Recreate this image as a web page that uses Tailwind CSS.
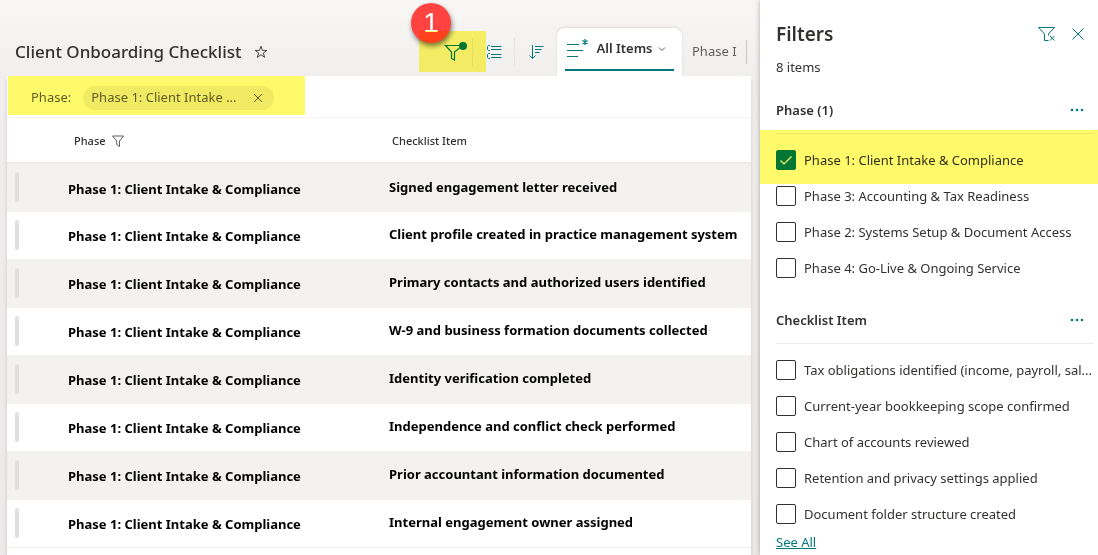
<!DOCTYPE html>
<html lang="en">
<head>
<meta charset="utf-8">
<meta name="viewport" content="width=device-width, initial-scale=1">
<title>Client Onboarding Checklist</title>
<script src="https://cdn.jsdelivr.net/npm/@tailwindcss/browser@4"></script>
</head>
<body class="h-screen overflow-hidden bg-[#edebe9] font-['Noto_Sans','Open_Sans',sans-serif] text-[13px] text-[#323130]">
<div class="flex h-full">

  <main class="flex min-w-0 flex-1 flex-col bg-linear-to-b from-[#f8f7f6] from-0% via-[#f1efee] via-[76px] to-[#eceae9] pr-[9px]">
    <header class="relative flex h-19 shrink-0 items-end pl-[15px]">
      <div class="flex h-12 flex-1 items-center gap-3">
        <h1 class="text-[17px] font-medium whitespace-nowrap">Client Onboarding Checklist</h1>
        <button aria-label="Add to favorites">
          <svg class="size-3.5" viewBox="0 0 14 14" fill="none" stroke="#484644"><path d="M7 1.2 8.4 5.4H12.9L9.3 8 10.7 12.4 7 9.7 3.3 12.4 4.7 8 1.1 5.4H5.6Z"/></svg>
        </button>
      </div>
      <div class="flex h-12 items-center text-[#03787c]">
        <button aria-label="Filter" class="flex h-7 w-[42px] items-center justify-center border-r border-[#e4e2e0] pl-2">
          <svg class="h-5 w-6" viewBox="0 0 24 20" fill="none" stroke="currentColor" stroke-width="1.200"><path d="M15 3.500H1.500L7.500 10V16.500L10.500 18V10L15.500 6"/><circle cx="19" cy="3" r="4" fill="currentColor" stroke="none" transform="translate(0 1)"/></svg>
        </button>
        <button aria-label="Group by" class="flex h-7 w-[42px] items-center justify-center border-r border-[#e4e2e0]">
          <svg class="h-4 w-4" viewBox="0 0 16 16" fill="none" stroke="currentColor"><path d="M5 2.500H15.500M5 5.500H15.500M5 10.500H15.500M5 13.500H15.500"/><path d="M4 1.500H2.500L1.500 2.500V5.500L2.500 6.500H4M4 9.500H2.500L1.500 10.500V13.500L2.500 14.500H4"/></svg>
        </button>
        <button aria-label="Sort" class="flex h-7 w-[42px] items-center justify-center">
          <svg class="h-4 w-4" viewBox="0 0 16 16" fill="none" stroke="currentColor"><path d="M4.500 1V14.500M1.500 11.500 4.500 14.500 7.500 11.500M7 2.500H15.500M7 5.500H13.500M7 8.500H11.500"/></svg>
        </button>
      </div>
      <button class="flex h-12 w-[125px] flex-col rounded-t-lg bg-white px-2 shadow-[0_-1px_3px_rgba(0,0,0,0.1)]">
        <span class="flex h-[43px] w-full items-center justify-between border-b-2 border-[#03787c] px-0.5">
          <svg class="h-5 w-6 text-[#03787c]" viewBox="0 0 24 20" fill="none" stroke="currentColor" stroke-width="1.200"><path d="M0 5.500H12M0 11.500H16M0 17.500H11"/><path d="M18 0V6M15.400 1.500 20.600 4.500M20.600 1.500 15.400 4.500"/></svg>
          <span class="text-[13px] font-semibold whitespace-nowrap">All Items</span>
          <svg class="mr-1.5 size-2" viewBox="0 0 8 8" fill="none" stroke="#605e5c"><path d="M1 2.500 4 5.500 7 2.500"/></svg>
        </span>
      </button>
      <div class="flex h-12 items-center">
        <button class="ml-2.5 w-[54px] text-left whitespace-nowrap text-[#605e5c]">Phase I</button>
        <span class="h-6 w-px bg-[#c8c6c4]"></span>
        <span class="w-1"></span>
      </div>
      <span class="absolute top-[3px] right-[300px] grid size-10 place-items-center rounded-full bg-[#ff4340] font-['Liberation_Sans',Arial,sans-serif] text-[28px] leading-none text-white shadow-[1px_3px_5px_rgba(0,0,0,0.5)]">1</span>
      <span class="pointer-events-none absolute top-[31px] right-[265px] h-[41px] w-[67px] bg-[#fffa6a] mix-blend-multiply"></span>
    </header>

    <section class="ml-[7px] flex-1 bg-white shadow-[0_4px_4px_rgba(0,0,0,0.15)]">
      <div class="relative flex h-[42px] items-center gap-3 border-b border-[#f5f4f3] pt-0.5 pl-6 text-[#605e5c]">
        <span>Phase:</span>
        <span class="flex h-6 w-[191px] items-center justify-between rounded-full bg-[#f1f0ef] pr-2.5 pl-2">
          <span>Phase 1: Client Intake ...</span>
          <button aria-label="Remove filter"><svg class="size-3" viewBox="0 0 12 12" fill="none" stroke="currentColor"><path d="M2 2 10 10M10 2 2 10"/></svg></button>
        </span>
        <span class="pointer-events-none absolute top-0 left-px h-[39px] w-[297px] bg-[#fffa6a] mix-blend-multiply"></span>
      </div>
      <table class="w-full table-fixed border-collapse text-left">
        <thead>
          <tr class="h-[45px] border-b-2 border-[#edebe9] text-[11px]">
            <th class="w-[61px]"></th>
            <th class="w-[321px] pt-0.5 pl-1.5 font-medium"><span class="flex items-center gap-1.5">Phase <svg class="size-3" viewBox="0 0 12 12" fill="none" stroke="#605e5c"><path d="M0.500 1H11.500L7.500 6V11.500L4.700 9.500V6Z"/></svg></span></th>
            <th class="pt-0.5 pl-[3px] font-medium">Checklist Item</th>
          </tr>
        </thead>
        <tbody class="font-bold whitespace-nowrap text-black">
          <tr class="h-12 border-b border-[#f3f2f1] bg-[#f3f2f1]"><td class="pl-2"><div class="h-[30px] w-1 rounded-sm bg-[#e1dfdd]"></div></td><td class="pt-1">Phase 1: Client Intake &amp; Compliance</td><td>Signed engagement letter received</td></tr>
          <tr class="h-12 border-b border-[#f3f2f1]"><td class="pl-2"><div class="h-[30px] w-1 rounded-sm bg-[#e1dfdd]"></div></td><td class="pt-1">Phase 1: Client Intake &amp; Compliance</td><td>Client profile created in practice management system</td></tr>
          <tr class="h-12 border-b border-[#f3f2f1] bg-[#f3f2f1]"><td class="pl-2"><div class="h-[30px] w-1 rounded-sm bg-[#e1dfdd]"></div></td><td class="pt-1">Phase 1: Client Intake &amp; Compliance</td><td>Primary contacts and authorized users identified</td></tr>
          <tr class="h-12 border-b border-[#f3f2f1]"><td class="pl-2"><div class="h-[30px] w-1 rounded-sm bg-[#e1dfdd]"></div></td><td class="pt-1">Phase 1: Client Intake &amp; Compliance</td><td>W-9 and business formation documents collected</td></tr>
          <tr class="h-12 border-b border-[#f3f2f1] bg-[#f3f2f1]"><td class="pl-2"><div class="h-[30px] w-1 rounded-sm bg-[#e1dfdd]"></div></td><td class="pt-1">Phase 1: Client Intake &amp; Compliance</td><td>Identity verification completed</td></tr>
          <tr class="h-12 border-b border-[#f3f2f1]"><td class="pl-2"><div class="h-[30px] w-1 rounded-sm bg-[#e1dfdd]"></div></td><td class="pt-1">Phase 1: Client Intake &amp; Compliance</td><td>Independence and conflict check performed</td></tr>
          <tr class="h-12 border-b border-[#f3f2f1] bg-[#f3f2f1]"><td class="pl-2"><div class="h-[30px] w-1 rounded-sm bg-[#e1dfdd]"></div></td><td class="pt-1">Phase 1: Client Intake &amp; Compliance</td><td>Prior accountant information documented</td></tr>
          <tr class="h-12 border-b border-[#f3f2f1]"><td class="pl-2"><div class="h-[30px] w-1 rounded-sm bg-[#e1dfdd]"></div></td><td class="pt-1">Phase 1: Client Intake &amp; Compliance</td><td>Internal engagement owner assigned</td></tr>
        </tbody>
      </table>
    </section>
  </main>

  <aside class="relative w-[338px] shrink-0 bg-white pt-5 pr-1 pl-4 shadow-[0_0_5px_rgba(0,0,0,0.3)]">
    <div class="flex h-7 items-center justify-between pr-2.5">
      <h2 class="text-[19px] font-semibold">Filters</h2>
      <div class="flex items-center gap-4 text-[#03787c]">
        <button aria-label="Clear filters"><svg class="h-4 w-[18px]" viewBox="0 0 18 16" fill="none" stroke="currentColor"><path d="M0.500 1.500H16.500L10.500 8V9.500M0.500 1.500 6.500 8V14.500H10.500"/><path d="M12 10 16.500 14.500M16.500 10 12 14.500"/></svg></button>
        <button aria-label="Close"><svg class="size-3" viewBox="0 0 12 12" fill="none" stroke="currentColor"><path d="M0.500 0.500 11.500 11.500M11.500 0.500 0.500 11.500"/></svg></button>
      </div>
    </div>
    <p class="mt-[9px] h-5 leading-5">8 items</p>

    <fieldset class="relative mt-[23px]">
      <div class="flex h-[34px] items-start justify-between border-b border-[#edebe9] pr-2.5">
        <h3 class="leading-5 font-semibold">Phase (1)</h3>
        <button aria-label="Phase options" class="flex h-5 items-center"><svg class="h-1 w-3.5" viewBox="0 0 14 4" fill="#03787c"><circle cx="2" cy="2" r="1.300"/><circle cx="7" cy="2" r="1.300"/><circle cx="12" cy="2" r="1.300"/></svg></button>
      </div>
      <div class="flex flex-col pt-2">
        <label class="flex h-9 items-center gap-2"><span class="grid shrink-0"><input type="checkbox" checked class="peer col-start-1 row-start-1 size-5 appearance-none rounded-xs border border-[#323130] checked:border-[#03787c] checked:bg-[#03787c]"><svg class="pointer-events-none invisible col-start-1 row-start-1 size-5 peer-checked:visible" viewBox="0 0 20 20" fill="none" stroke="white" stroke-width="1.200"><path d="M4.500 10.500 8 14 15.500 6.500"/></svg></span><span class="truncate pt-0.5">Phase 1: Client Intake &amp; Compliance</span></label>
        <label class="flex h-9 items-center gap-2"><input type="checkbox" class="size-5 shrink-0 appearance-none rounded-xs border border-[#323130] checked:bg-[#03787c]"><span class="truncate pt-0.5">Phase 3: Accounting &amp; Tax Readiness</span></label>
        <label class="flex h-9 items-center gap-2"><input type="checkbox" class="size-5 shrink-0 appearance-none rounded-xs border border-[#323130] checked:bg-[#03787c]"><span class="truncate pt-0.5">Phase 2: Systems Setup &amp; Document Access</span></label>
        <label class="flex h-9 items-center gap-2"><input type="checkbox" class="size-5 shrink-0 appearance-none rounded-xs border border-[#323130] checked:bg-[#03787c]"><span class="truncate pt-0.5">Phase 4: Go-Live &amp; Ongoing Service</span></label>
      </div>
      <span class="pointer-events-none absolute top-[30px] -right-1 -left-4 h-[54px] bg-[#fffa6a] mix-blend-multiply"></span>
    </fieldset>

    <fieldset class="mt-6">
      <div class="flex h-[34px] items-start justify-between border-b border-[#edebe9] pr-2.5">
        <h3 class="leading-5 font-semibold">Checklist Item</h3>
        <button aria-label="Checklist Item options" class="flex h-5 items-center"><svg class="h-1 w-3.5" viewBox="0 0 14 4" fill="#03787c"><circle cx="2" cy="2" r="1.300"/><circle cx="7" cy="2" r="1.300"/><circle cx="12" cy="2" r="1.300"/></svg></button>
      </div>
      <div class="flex flex-col pt-2">
        <label class="flex h-9 items-center gap-2"><input type="checkbox" class="size-5 shrink-0 appearance-none rounded-xs border border-[#323130] checked:bg-[#03787c]"><span class="truncate pt-0.5">Tax obligations identified (income, payroll, sal...</span></label>
        <label class="flex h-9 items-center gap-2"><input type="checkbox" class="size-5 shrink-0 appearance-none rounded-xs border border-[#323130] checked:bg-[#03787c]"><span class="truncate pt-0.5">Current-year bookkeeping scope confirmed</span></label>
        <label class="flex h-9 items-center gap-2"><input type="checkbox" class="size-5 shrink-0 appearance-none rounded-xs border border-[#323130] checked:bg-[#03787c]"><span class="truncate pt-0.5">Chart of accounts reviewed</span></label>
        <label class="flex h-9 items-center gap-2"><input type="checkbox" class="size-5 shrink-0 appearance-none rounded-xs border border-[#323130] checked:bg-[#03787c]"><span class="truncate pt-0.5">Retention and privacy settings applied</span></label>
        <label class="flex h-9 items-center gap-2"><input type="checkbox" class="size-5 shrink-0 appearance-none rounded-xs border border-[#323130] checked:bg-[#03787c]"><span class="truncate pt-0.5">Document folder structure created</span></label>
      </div>
      <a href="#" class="block w-fit leading-5 text-[#03787c] underline">See All</a>
    </fieldset>
  </aside>
</div>
</body>
</html>
